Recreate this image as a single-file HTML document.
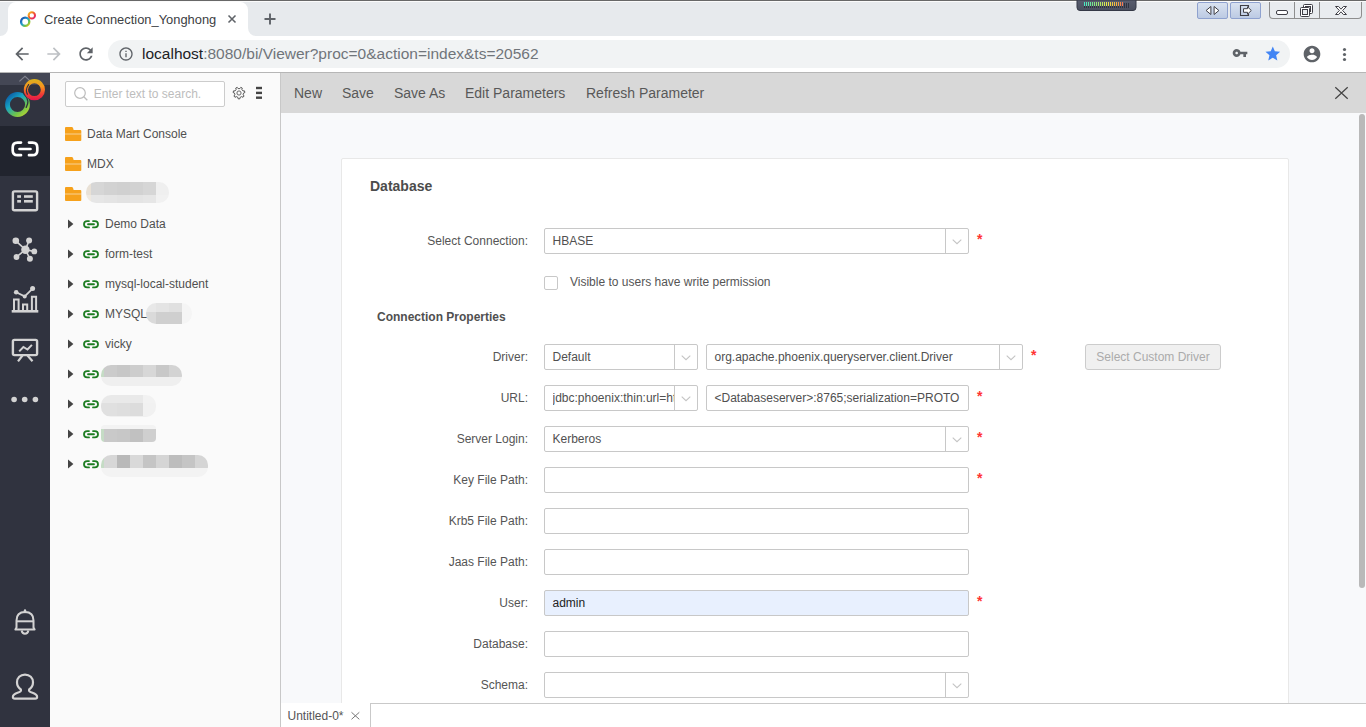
<!DOCTYPE html>
<html>
<head>
<meta charset="utf-8">
<title>Create Connection_Yonghong</title>
<style>
*{box-sizing:border-box;margin:0;padding:0}
html,body{width:1366px;height:727px;overflow:hidden;background:#fff;font-family:"Liberation Sans",sans-serif;}
body{position:relative;font-size:12px;color:#444}
.abs{position:absolute}
svg{display:block;position:absolute;overflow:visible}
/* ---------- browser chrome ---------- */
#tabstrip{left:0;top:0;width:1366px;height:36px;background:#e7eaed}
#topline{left:0;top:0;width:1366px;height:2px;background:linear-gradient(#686868 0,#686868 50%,#fbfbfb 50%,#fbfbfb 100%)}
#tab{left:8px;top:3px;width:240px;height:33px;background:#fff;border-radius:8px 8px 0 0}
#tabtitle{left:44px;top:12px;font-size:12.9px;color:#3c4043;white-space:nowrap;line-height:16px}
#navbar{left:0;top:36px;width:1366px;height:36px;background:#fff}
#navline{left:0;top:72px;width:1366px;height:1px;background:#b6b6b6}
#pill{left:108px;top:40px;width:1182px;height:28px;border-radius:14px;background:#f1f3f4}
#url{left:142px;top:44px;font-size:15.5px;line-height:20px;color:#70757a;white-space:nowrap}
#url b{font-weight:normal;color:#202124}
/* ---------- app ---------- */
#leftnav{left:0;top:73px;width:50px;height:654px;background:#30333f}
#navsel{left:0;top:126px;width:50px;height:50px;background:#21242e}
#navtop{left:0;top:73px;width:50px;height:12px;background:#444755}
#tree{left:50px;top:73px;width:230px;height:654px;background:#fafafa}
#treeborder{left:280px;top:73px;width:1px;height:654px;background:#c8c8c8}
#search{left:65px;top:81px;width:160px;height:26px;border:1px solid #ccc;border-radius:2px;background:#fff}
#search span{position:absolute;left:27.800px;top:5px;font-size:12px;line-height:14px;color:#bdbdbd;white-space:nowrap}
.trow{position:absolute;left:50px;width:230px;height:30px;line-height:32px;font-size:12px;color:#505050;white-space:nowrap}
.trow span{position:absolute;top:0}
/* main */
#mtool{left:281px;top:73px;width:1085px;height:40px;background:#d8d8d8}
#mtool span{position:absolute;top:0;line-height:40px;font-size:14px;color:#585858;white-space:nowrap}
#mainbg{left:281px;top:113px;width:1085px;height:590px;background:#f8f9fb}
#card{left:341px;top:158px;width:948px;height:560px;background:#fff;border:1px solid #e8e8e8;border-radius:2px}
.lbl{position:absolute;left:341px;width:187px;text-align:right;font-size:12px;line-height:26px;color:#555;white-space:nowrap}
.inp{position:absolute;height:26px;border:1px solid #c8c8c8;border-radius:2px;background:#fff;font-size:12px;line-height:24px;color:#505050;white-space:nowrap;overflow:hidden}
.inp span{position:absolute;left:7.500px;top:0}
.inp u{display:block;text-decoration:none;width:122px;overflow:hidden}
.inp i{position:absolute;right:22px;top:0;width:1px;height:24px;background:#c8c8c8}
.star{position:absolute;font-size:14px;line-height:14px;color:#f33;font-weight:bold}
#bottombar{left:281px;top:703px;width:1085px;height:24px;background:#fff}
</style>
</head>
<body>
<!-- ================= BROWSER CHROME ================= -->
<div id="tabstrip" class="abs"></div>
<svg style="left:0;top:0" width="260" height="36" viewBox="0 0 260 36"><path d="M0 36A8 8 0 0 0 8 28V10A8 8 0 0 1 16 2H240A8 8 0 0 1 248 10V28A8 8 0 0 0 256 36Z" fill="#fff"/></svg>
<div id="topline" class="abs"></div>
<div id="tabtitle" class="abs">Create Connection_Yonghong</div>
<div id="navbar" class="abs"></div>
<div id="pill" class="abs"></div>
<div id="url" class="abs"><b>localhost</b>:8080/bi/Viewer?proc=0&amp;action=index&amp;ts=20562</div>
<div id="navline" class="abs"></div>
<!--CHROME-ICONS-START-->
<svg style="left:20px;top:11px" width="16" height="16" viewBox="0 0 16 16" ><defs>
<linearGradient id="fg1" x1="0" y1="0" x2="1" y2="1"><stop offset="0" stop-color="#1b3fa6"/><stop offset=".45" stop-color="#1f9fd0"/><stop offset=".75" stop-color="#6cc24a"/><stop offset="1" stop-color="#f2c61f"/></linearGradient>
<linearGradient id="fg2" x1="0" y1="0" x2="1" y2="1"><stop offset="0" stop-color="#f7c51e"/><stop offset=".5" stop-color="#f0562b"/><stop offset="1" stop-color="#e5177b"/></linearGradient>
</defs>
<circle cx="5.200" cy="10.700" r="4.100" fill="none" stroke="url(#fg1)" stroke-width="2.300"/>
<circle cx="11.800" cy="4.400" r="3.200" fill="none" stroke="url(#fg2)" stroke-width="2"/></svg>
<svg style="left:228px;top:15px" width="8" height="8" viewBox="0 0 8 8" ><path d="M0.500 0.500L7.500 7.500M7.500 0.500L0.500 7.500" stroke="#5f6368" stroke-width="1.550" fill="none"/></svg>
<svg style="left:264px;top:13px" width="12" height="12" viewBox="0 0 12 12" ><path d="M6 0.500V11.500M0.500 6H11.500" stroke="#5f6368" stroke-width="1.900" fill="none"/></svg>
<svg style="left:12px;top:44px" width="20" height="20" viewBox="0 0 24 24" ><path fill="#5f6368" d="M20 11H7.83l5.59-5.59L12 4l-8 8 8 8 1.41-1.41L7.83 13H20v-2z"/></svg>
<svg style="left:44px;top:44px" width="20" height="20" viewBox="0 0 24 24" ><path fill="#bdc0c4" d="M12 4l-1.41 1.41L16.17 11H4v2h12.17l-5.58 5.59L12 20l8-8z"/></svg>
<svg style="left:76px;top:44px" width="20" height="20" viewBox="0 0 24 24" ><path fill="#5f6368" d="M17.65 6.35C16.2 4.9 14.21 4 12 4c-4.42 0-7.99 3.58-7.99 8s3.57 8 7.99 8c3.73 0 6.84-2.55 7.73-6h-2.08c-.82 2.33-3.04 4-5.65 4-3.31 0-6-2.69-6-6s2.69-6 6-6c1.66 0 3.14.69 4.22 1.78L13 11h7V4l-2.35 2.35z"/></svg>
<svg style="left:117.5px;top:46px" width="16" height="16" viewBox="0 0 24 24" ><path fill="#5f6368" d="M11 17h2v-6h-2v6zm1-15C6.48 2 2 6.48 2 12s4.48 10 10 10 10-4.48 10-10S17.52 2 12 2zm0 18c-4.41 0-8-3.59-8-8s3.59-8 8-8 8 3.59 8 8-3.59 8-8 8zM11 9h2V7h-2v2z"/></svg>
<svg style="left:1232px;top:45.300px" width="16" height="16" viewBox="0 0 24 24" ><path fill="#5f6368" d="M12.65 10C11.83 7.67 9.61 6 7 6c-3.31 0-6 2.69-6 6s2.690 6 6 6c2.61 0 4.83-1.67 5.65-4H17v4h4v-4h2v-4H12.65zM7 14c-1.1 0-2-.9-2-2s.9-2 2-2 2 .9 2 2-.9 2-2 2z"/></svg>
<svg style="left:1263.500px;top:45.300px" width="17.600" height="17.600" viewBox="0 0 24 24" ><path fill="#4285f4" d="M12 17.27L18.18 21l-1.64-7.03L22 9.24l-7.19-.61L12 2 9.19 8.63 2 9.24l5.46 4.73L5.82 21z"/></svg>
<svg style="left:1302px;top:44px" width="20" height="20" viewBox="0 0 24 24" ><path fill="#5f6368" d="M12 2C6.48 2 2 6.48 2 12s4.48 10 10 10 10-4.48 10-10S17.52 2 12 2zm0 3c1.66 0 3 1.34 3 3s-1.34 3-3 3-3-1.34-3-3 1.34-3 3-3zm0 14.2c-2.5 0-4.71-1.28-6-3.220.03-1.99 4-3.08 6-3.08 1.990 0 5.97 1.09 6 3.08-1.29 1.94-3.500 3.22-6 3.22z"/></svg>
<svg style="left:1342px;top:47px" width="5" height="15" viewBox="0 0 5 15" ><circle cx="2.5" cy="2.5" r="1.6" fill="#5f6368"/><circle cx="2.5" cy="7.5" r="1.6" fill="#5f6368"/><circle cx="2.5" cy="12.5" r="1.6" fill="#5f6368"/></svg>
<svg style="left:1077px;top:0px" width="59" height="11" viewBox="0 0 59 11" ><defs><linearGradient id="mg" x1="0" y1="0" x2="0" y2="1"><stop offset="0" stop-color="#585d6e"/><stop offset="1" stop-color="#4a4f5f"/></linearGradient></defs><path d="M0 0H59V7.5Q59 10.5 56 10.5H3Q0 10.500 0 7.5Z" fill="url(#mg)" stroke="#353946" stroke-width="1"/><rect x="7" y="2" width="1" height="4" fill="rgb(70, 232, 196)"/><rect x="7" y="6" width="1" height="2" fill="#2f3340"/><rect x="9" y="2" width="1" height="4" fill="rgb(82, 232, 183)"/><rect x="9" y="6" width="1" height="2" fill="#2f3340"/><rect x="11" y="2" width="1" height="4" fill="rgb(95, 232, 169)"/><rect x="11" y="6" width="1" height="2" fill="#2f3340"/><rect x="13" y="2" width="1" height="4" fill="rgb(107, 232, 156)"/><rect x="13" y="6" width="1" height="2" fill="#2f3340"/><rect x="15" y="2" width="1" height="4" fill="rgb(119, 232, 143)"/><rect x="15" y="6" width="1" height="2" fill="#2f3340"/><rect x="17" y="2" width="1" height="4" fill="rgb(131, 232, 129)"/><rect x="17" y="6" width="1" height="2" fill="#2f3340"/><rect x="19" y="2" width="1" height="4" fill="rgb(145, 232, 117)"/><rect x="19" y="6" width="1" height="2" fill="#2f3340"/><rect x="21" y="2" width="1" height="4" fill="rgb(162, 232, 109)"/><rect x="21" y="6" width="1" height="2" fill="#2f3340"/><rect x="23" y="2" width="1" height="4" fill="rgb(179, 232, 100)"/><rect x="23" y="6" width="1" height="2" fill="#2f3340"/><rect x="25" y="2" width="1" height="4" fill="rgb(196, 232, 91)"/><rect x="25" y="6" width="1" height="2" fill="#2f3340"/><rect x="27" y="2" width="1" height="4" fill="rgb(212, 232, 82)"/><rect x="27" y="6" width="1" height="2" fill="#2f3340"/><rect x="29" y="2" width="1" height="4" fill="rgb(229, 232, 74)"/><rect x="29" y="6" width="1" height="2" fill="#2f3340"/><rect x="31" y="2" width="1" height="4" fill="rgb(237, 225, 69)"/><rect x="31" y="6" width="1" height="2" fill="#2f3340"/><rect x="33" y="2" width="1" height="4" fill="rgb(239, 213, 67)"/><rect x="33" y="6" width="1" height="2" fill="#2f3340"/><rect x="35" y="2" width="1" height="4" fill="rgb(240, 201, 65)"/><rect x="35" y="6" width="1" height="2" fill="#2f3340"/><rect x="37" y="2" width="1" height="4" fill="rgb(242, 190, 62)"/><rect x="37" y="6" width="1" height="2" fill="#2f3340"/><rect x="39" y="2" width="1" height="4" fill="rgb(244, 178, 60)"/><rect x="39" y="6" width="1" height="2" fill="#2f3340"/><rect x="41" y="2" width="1" height="4" fill="rgb(244, 159, 67)"/><rect x="41" y="6" width="1" height="2" fill="#2f3340"/><rect x="43" y="2" width="1" height="4" fill="rgb(244, 140, 76)"/><rect x="43" y="6" width="1" height="2" fill="#2f3340"/><rect x="45" y="2" width="1" height="4" fill="rgb(244, 120, 84)"/><rect x="45" y="6" width="1" height="2" fill="#2f3340"/><rect x="47" y="3" width="1" height="5" fill="#2f3340"/><rect x="49" y="3" width="1" height="5" fill="#2f3340"/><rect x="51" y="3" width="1" height="5" fill="#2f3340"/></svg>
<div class="abs" style="left:1197px;top:2px;width:31px;height:17px;border:1px solid #8fa2cf;border-radius:2px;background:linear-gradient(#d9e2f0,#bccae3)"></div>
<div class="abs" style="left:1230px;top:2px;width:31px;height:17px;border:1px solid #8fa2cf;border-radius:2px;background:linear-gradient(#d9e2f0,#bccae3)"></div>
<svg style="left:1205px;top:6px" width="16" height="9" viewBox="0 0 16 9" ><path d="M5.900 0.500V8.500L1.100 4.500Z M9.100 0.500V8.500L13.900 4.500Z" fill="#fff" stroke="#3f3f46" stroke-width="1" stroke-linejoin="round"/></svg>
<svg style="left:1240px;top:5px" width="12" height="11" viewBox="0 0 12 11" ><path d="M8.500 2.500V0.5H0.5V10.5H8.5V8.500" fill="none" stroke="#3f3f46" stroke-width="1.1"/><path d="M3.5 3.700H7.500V1.800L11.300 5.500L7.500 9.200V7.300H3.500Z" fill="#fff" stroke="#3f3f46" stroke-width="1" stroke-linejoin="round"/></svg>
<div class="abs" style="left:1269px;top:2px;width:93px;height:17px;border:1px solid #8e8e8e;border-top:none;border-radius:0 0 4px 4px;background:#e9ecef"></div>
<div class="abs" style="left:1294px;top:2px;width:1px;height:16px;background:#8e8e8e"></div>
<div class="abs" style="left:1319px;top:2px;width:1px;height:16px;background:#8e8e8e"></div>
<svg style="left:1276px;top:10px" width="12" height="5" viewBox="0 0 12 5" ><rect x="0.5" y="0.5" width="11" height="4" rx="1.5" fill="#fff" stroke="#3f3f46" stroke-width="1"/></svg>
<svg style="left:1300px;top:4px" width="13" height="13" viewBox="0 0 13 13" ><rect x="3.5" y="0.5" width="9" height="9" rx="1" fill="#fff" stroke="#3f3f46"/><rect x="5.5" y="2.5" width="5" height="5" fill="#e9ecef" stroke="#3f3f46"/><rect x="0.500" y="3.5" width="9" height="9" rx="1" fill="#fff" stroke="#3f3f46"/><rect x="2.500" y="5.500" width="5" height="5" fill="#e9ecef" stroke="#3f3f46"/></svg>
<svg style="left:1335px;top:5.5px" width="12" height="9" viewBox="0 0 12 9" ><path d="M0.5 0.5H3.600L6 3.200L8.400 0.5H11.500L7.600 4.5L11.500 8.500H8.400L6 5.800L3.600 8.5H0.500L4.400 4.500Z" fill="#fff" stroke="#3f3f46" stroke-width="1" stroke-linejoin="round"/></svg>
<!--CHROME-ICONS-END-->

<!-- ================= APP ================= -->
<div id="leftnav" class="abs"></div>
<div id="navtop" class="abs"></div>
<div id="navsel" class="abs"></div>
<!--NAV-ICONS-START-->
<svg style="left:0;top:73px" width="50" height="654" viewBox="0 73 50 654">
<defs>
<linearGradient id="lg1" gradientUnits="userSpaceOnUse" x1="8" y1="94" x2="27" y2="116"><stop offset="0" stop-color="#0b56a4"/><stop offset=".35" stop-color="#16a3c4"/><stop offset=".7" stop-color="#6fc34c"/><stop offset="1" stop-color="#c2d82e"/></linearGradient>
<linearGradient id="lg2" gradientUnits="userSpaceOnUse" x1="34" y1="79" x2="34" y2="101"><stop offset="0" stop-color="#d8b41f"/><stop offset=".35" stop-color="#f7941d"/><stop offset=".7" stop-color="#ef3b36"/><stop offset="1" stop-color="#e5104f"/></linearGradient>
</defs>
<path d="M19.4 81.400L25 76.400L30.600 81.400" fill="none" stroke="#80838f" stroke-width="1.2"/>
<circle cx="17.500" cy="104.500" r="10" fill="none" stroke="url(#lg1)" stroke-width="4.800"/><path d="M23.600 93.600Q27.600 97.500 27.900 101.500Q28 104 26.200 107.400" fill="none" stroke="#30333f" stroke-width="1.300" stroke-linecap="round"/>
<circle cx="34.400" cy="89.700" r="8.500" fill="none" stroke="url(#lg2)" stroke-width="4.200"/><path d="M28.600 84.600Q26.300 87.600 26.400 90.500Q26.500 92.500 27.400 94.200" fill="none" stroke="#30333f" stroke-width="1.200" stroke-linecap="round"/>
<!-- link (selected, white) -->
<g fill="none" stroke="#fff" stroke-width="2.7" stroke-linecap="round">
<path d="M21 142.600H17.500Q12.700 142.600 12.700 147.400V150.400Q12.700 155.200 17.500 155.200H21"/>
<path d="M29 142.600H32.500Q37.300 142.600 37.300 147.400V150.400Q37.300 155.200 32.500 155.200H29"/>
<path d="M19.500 149H30.500"/>
</g>
<!-- list -->
<rect x="12.900" y="191.400" width="24.200" height="18.800" rx="1.500" fill="none" stroke="#d3d3d3" stroke-width="2.400"/>
<g fill="#d3d3d3"><rect x="17.200" y="195.200" width="3.800" height="2.600"/><rect x="24" y="195.200" width="8.800" height="2.600"/><rect x="17.200" y="200" width="3.800" height="2.600"/><rect x="24" y="200" width="8.800" height="2.600"/></g>
<!-- network -->
<g stroke="#d3d3d3" stroke-width="1.600" fill="#d3d3d3">
<path d="M25.400 249.700L15.800 240.800M25.400 249.700L29.100 240.500M25.400 249.700L34.300 251.400M25.400 249.700L16.500 257M25.400 249.700L29.900 258.700" fill="none"/>
</g>
<g fill="#d3d3d3"><circle cx="25.400" cy="249.700" r="4.200"/><circle cx="15.800" cy="240.800" r="3.300"/><circle cx="29.100" cy="240.500" r="3"/><circle cx="34.300" cy="251.400" r="2.900"/><circle cx="16.500" cy="257" r="2.900"/><circle cx="29.900" cy="258.700" r="3"/></g>
<!-- chart -->
<g fill="none" stroke="#d3d3d3" stroke-width="2">
<path d="M11.700 311.300H38.300" stroke-width="2.600"/>
<path d="M14 311V299.500H18.600V311M23 311V304.600H27.200V311M31.900 311V296.700H36.100V311"/>
<path d="M16.200 292.300L24.700 296.400L32.600 288.600" stroke-width="1.800"/>
</g>
<g fill="#d3d3d3"><circle cx="16.200" cy="292.300" r="2.300"/><circle cx="24.700" cy="296.400" r="2"/><circle cx="32.600" cy="288.600" r="2.500"/></g>
<!-- presentation -->
<g fill="none" stroke="#d3d3d3" stroke-width="2.400">
<rect x="12.900" y="339.900" width="24.200" height="15.200" rx="1.500"/>
<path d="M22.500 355.500L18 361.300M27.500 355.500L32.500 361.300" stroke-width="2.200"/>
<path d="M19.200 351.400L23.400 347L27.500 349.500L31.900 344.900" stroke-width="2"/>
</g>
<!-- dots -->
<g fill="#d3d3d3"><circle cx="14.100" cy="399.500" r="2.800"/><circle cx="24.700" cy="399.500" r="2.800"/><circle cx="35.400" cy="399.500" r="2.800"/></g>
<!-- bell -->
<g fill="none" stroke="#d3d3d3" stroke-width="2" stroke-linejoin="round">
<path d="M15.400 629.500H34.600L33.500 627.500V620.500Q33.500 612 25 612Q16.500 612 16.500 620.500V627.500Z"/>
<path d="M16.500 621.300H33.500"/>
<path d="M21.600 630.500Q22.200 633.800 25 633.800Q27.800 633.800 28.400 630.500"/>
<path d="M25 612V610.400" stroke-linecap="round" stroke-width="2.400"/>
</g>
<!-- user -->
<path d="M25 674.600C20.200 674.600 17 678 17 682.300C17 685.600 18.600 688 20.900 689.500C21.500 691.200 20 692 17.500 692.800C14.500 693.800 12.900 694.900 12.900 697C12.900 698.200 13.600 698.700 14.800 698.700H35.200C36.400 698.700 37.100 698.200 37.100 697C37.100 694.900 35.500 693.800 32.500 692.800C30 692 28.500 691.200 29.100 689.500C31.400 688 33 685.600 33 682.300C33 678 29.800 674.600 25 674.600Z" fill="none" stroke="#d3d3d3" stroke-width="2.200" stroke-linejoin="round"/>
</svg>
<!--NAV-ICONS-END-->
<div id="tree" class="abs"></div>
<div id="treeborder" class="abs"></div>
<div id="search" class="abs"><span>Enter text to search.</span></div>
<!--TREE-START-->
<svg style="left:74px;top:87px" width="14" height="14" viewBox="0 0 14 14"><circle cx="6" cy="6" r="5.3" fill="none" stroke="#bdbdbd" stroke-width="1.2"/><path d="M9.800 9.800L13.300 13.300" stroke="#bdbdbd" stroke-width="1.3" fill="none"/></svg>
<svg style="left:231.900px;top:85.700px" width="14" height="14" viewBox="0 0 14 14"><path d="M8.12 11.36L7.84 12.84L6.16 12.84L5.88 11.36L4.29 10.59L2.96 11.30L1.91 9.98L2.89 8.84L2.50 7.12L1.12 6.52L1.50 4.88L3.00 4.94L4.10 3.56L3.71 2.11L5.23 1.37L6.12 2.59L7.88 2.59L8.77 1.37L10.29 2.11L9.90 3.56L11.00 4.94L12.50 4.88L12.88 6.52L11.50 7.12L11.11 8.84L12.09 9.98L11.04 11.30L9.71 10.59Z" fill="none" stroke="#555" stroke-width="1" stroke-linejoin="round"/><circle cx="7" cy="7" r="2.100" fill="none" stroke="#666" stroke-width="1"/></svg>
<svg style="left:256px;top:86px" width="6" height="14" viewBox="0 0 6 14"><rect x="0" y="0.800" width="6" height="2.400" fill="#444"/><rect x="0" y="5.700" width="6" height="2.400" fill="#444"/><rect x="0" y="10.500" width="6" height="2.400" fill="#444"/></svg>
<svg style="left:50px;top:73px" width="230" height="654" viewBox="50 73 230 654"><defs><clipPath id="b1"><rect x="86" y="182" width="83" height="21" rx="10"/></clipPath><clipPath id="b2"><rect x="146" y="303" width="46" height="21" rx="10"/></clipPath><clipPath id="b3"><rect x="101" y="365" width="81" height="21" rx="10"/></clipPath><clipPath id="b4"><rect x="101" y="395" width="55" height="22" rx="10"/></clipPath><clipPath id="b5"><rect x="101" y="425" width="55" height="17" rx="4"/></clipPath><clipPath id="b6"><rect x="101" y="455" width="107" height="22" rx="10"/></clipPath></defs><g clip-path="url(#b1)"><rect x="86" y="182" width="5" height="13" fill="#e9e1d6"/><rect x="86" y="195" width="5" height="8" fill="#efe9e0"/><rect x="91" y="182" width="13" height="13" fill="#d6d6d6"/><rect x="104" y="182" width="13" height="13" fill="#d2d2d2"/><rect x="117" y="182" width="13" height="13" fill="#d0d0d0"/><rect x="130" y="182" width="13" height="13" fill="#d2d2d2"/><rect x="143" y="182" width="13" height="13" fill="#d6d6d6"/><rect x="156" y="182" width="13" height="13" fill="#efefef"/><rect x="91" y="195" width="13" height="8" fill="#e6e6e6"/><rect x="104" y="195" width="13" height="8" fill="#e4e4e4"/><rect x="117" y="195" width="13" height="8" fill="#e2e2e2"/><rect x="130" y="195" width="13" height="8" fill="#e4e4e4"/><rect x="143" y="195" width="13" height="8" fill="#e6e6e6"/><rect x="156" y="195" width="13" height="8" fill="#f1f1f1"/></g><g clip-path="url(#b2)"><rect x="146" y="303" width="10" height="9" fill="#e8e8e8"/><rect x="156" y="303" width="13" height="9" fill="#e4e4e4"/><rect x="169" y="303" width="13" height="9" fill="#e0e0e0"/><rect x="182" y="303" width="10" height="9" fill="#f5f5f5"/><rect x="146" y="312" width="10" height="12" fill="#dadada"/><rect x="156" y="312" width="13" height="12" fill="#cfcfcf"/><rect x="169" y="312" width="13" height="12" fill="#cfcfcf"/><rect x="182" y="312" width="10" height="12" fill="#f5f5f5"/></g><g clip-path="url(#b3)"><rect x="101" y="365" width="3" height="12" fill="#c5dcc5"/><rect x="104" y="365" width="13" height="12" fill="#cbcbcb"/><rect x="117" y="365" width="13" height="12" fill="#c7c7c7"/><rect x="130" y="365" width="13" height="12" fill="#cdcdcd"/><rect x="143" y="365" width="13" height="12" fill="#d7d7d7"/><rect x="156" y="365" width="13" height="12" fill="#c8c8c8"/><rect x="169" y="365" width="13" height="12" fill="#d3d3d3"/><rect x="101" y="377" width="81" height="9" fill="#efefef"/></g><g clip-path="url(#b4)"><rect x="101" y="395" width="42" height="8" fill="#e9e9e9"/><rect x="143" y="395" width="13" height="8" fill="#f2f2f2"/><rect x="101" y="403" width="16" height="13" fill="#e0e0e0"/><rect x="117" y="403" width="13" height="13" fill="#dedede"/><rect x="130" y="403" width="13" height="13" fill="#dcdcdc"/><rect x="143" y="403" width="13" height="13" fill="#f1f1f1"/><rect x="101" y="416" width="55" height="1" fill="#f0f0f0"/></g><g clip-path="url(#b5)"><rect x="101" y="425" width="55" height="4" fill="#f3f3f3"/><rect x="101" y="429" width="3" height="13" fill="#c5dcc5"/><rect x="104" y="429" width="13" height="13" fill="#c9c9c9"/><rect x="117" y="429" width="13" height="13" fill="#c7c7c7"/><rect x="130" y="429" width="13" height="13" fill="#c1c1c1"/><rect x="143" y="429" width="13" height="13" fill="#cfcfcf"/></g><g clip-path="url(#b6)"><rect x="101" y="455" width="3" height="13" fill="#c5dcc5"/><rect x="104" y="455" width="13" height="13" fill="#d7d7d7"/><rect x="117" y="455" width="13" height="13" fill="#b9b9b9"/><rect x="130" y="455" width="13" height="13" fill="#d9d9d9"/><rect x="143" y="455" width="13" height="13" fill="#c5c5c5"/><rect x="156" y="455" width="13" height="13" fill="#d5d5d5"/><rect x="169" y="455" width="13" height="13" fill="#bdbdbd"/><rect x="182" y="455" width="13" height="13" fill="#c5c5c5"/><rect x="195" y="455" width="13" height="13" fill="#d5d5d5"/><rect x="101" y="468" width="107" height="9" fill="#f3f3f3"/></g></svg>
<svg style="left:64.5px;top:127px" width="16.300" height="14" viewBox="0 0 17 14" preserveAspectRatio="none"><path d="M0 1Q0 0 1 0H7Q8 0 8.400 1L9 3H16Q17 3 17 4V6.800H0Z" fill="#f6a11b"/><path d="M0 7.300H17V13Q17 14 16 14H1Q0 14 0 13Z" fill="#f6a11b"/><rect x="0" y="6.800" width="17" height="0.500" fill="#f9c067"/></svg><div class="trow" style="top:118px"><span style="left:37px">Data Mart Console</span></div>
<svg style="left:64.5px;top:157px" width="16.300" height="14" viewBox="0 0 17 14" preserveAspectRatio="none"><path d="M0 1Q0 0 1 0H7Q8 0 8.400 1L9 3H16Q17 3 17 4V6.800H0Z" fill="#f6a11b"/><path d="M0 7.300H17V13Q17 14 16 14H1Q0 14 0 13Z" fill="#f6a11b"/><rect x="0" y="6.800" width="17" height="0.500" fill="#f9c067"/></svg><div class="trow" style="top:148px"><span style="left:37px">MDX</span></div>
<svg style="left:64.5px;top:187px" width="16.300" height="14" viewBox="0 0 17 14" preserveAspectRatio="none"><path d="M0 1Q0 0 1 0H7Q8 0 8.400 1L9 3H16Q17 3 17 4V6.800H0Z" fill="#f6a11b"/><path d="M0 7.300H17V13Q17 14 16 14H1Q0 14 0 13Z" fill="#f6a11b"/><rect x="0" y="6.800" width="17" height="0.500" fill="#f9c067"/></svg>
<svg style="left:68px;top:219px" width="6" height="10" viewBox="0 0 6 10"><path d="M0 0.400L5.400 5L0 9.600Z" fill="#444"/></svg><svg style="left:83px;top:219.5px" width="16" height="9" viewBox="0 0 16 9"><g fill="none" stroke="#1d7d22" stroke-width="1.800" stroke-linecap="round"><path d="M6 1.100H4.200Q1 1.100 1 4.250Q1 7.400 4.200 7.400H6"/><path d="M10 1.100H11.800Q15 1.100 15 4.250Q15 7.400 11.800 7.400H10"/><path d="M5 4.250H11"/></g></svg><div class="trow" style="top:208px"><span style="left:55px">Demo Data</span></div>
<svg style="left:68px;top:249px" width="6" height="10" viewBox="0 0 6 10"><path d="M0 0.400L5.400 5L0 9.600Z" fill="#444"/></svg><svg style="left:83px;top:249.5px" width="16" height="9" viewBox="0 0 16 9"><g fill="none" stroke="#1d7d22" stroke-width="1.800" stroke-linecap="round"><path d="M6 1.100H4.200Q1 1.100 1 4.250Q1 7.400 4.200 7.400H6"/><path d="M10 1.100H11.800Q15 1.100 15 4.250Q15 7.400 11.800 7.400H10"/><path d="M5 4.250H11"/></g></svg><div class="trow" style="top:238px"><span style="left:55px">form-test</span></div>
<svg style="left:68px;top:279px" width="6" height="10" viewBox="0 0 6 10"><path d="M0 0.400L5.400 5L0 9.600Z" fill="#444"/></svg><svg style="left:83px;top:279.5px" width="16" height="9" viewBox="0 0 16 9"><g fill="none" stroke="#1d7d22" stroke-width="1.800" stroke-linecap="round"><path d="M6 1.100H4.200Q1 1.100 1 4.250Q1 7.400 4.200 7.400H6"/><path d="M10 1.100H11.800Q15 1.100 15 4.250Q15 7.400 11.800 7.400H10"/><path d="M5 4.250H11"/></g></svg><div class="trow" style="top:268px"><span style="left:55px">mysql-local-student</span></div>
<svg style="left:68px;top:309px" width="6" height="10" viewBox="0 0 6 10"><path d="M0 0.400L5.400 5L0 9.600Z" fill="#444"/></svg><svg style="left:83px;top:309.5px" width="16" height="9" viewBox="0 0 16 9"><g fill="none" stroke="#1d7d22" stroke-width="1.800" stroke-linecap="round"><path d="M6 1.100H4.200Q1 1.100 1 4.250Q1 7.400 4.200 7.400H6"/><path d="M10 1.100H11.800Q15 1.100 15 4.250Q15 7.400 11.800 7.400H10"/><path d="M5 4.250H11"/></g></svg><div class="trow" style="top:298px"><span style="left:55px">MYSQL</span></div>
<svg style="left:68px;top:339px" width="6" height="10" viewBox="0 0 6 10"><path d="M0 0.400L5.400 5L0 9.600Z" fill="#444"/></svg><svg style="left:83px;top:339.5px" width="16" height="9" viewBox="0 0 16 9"><g fill="none" stroke="#1d7d22" stroke-width="1.800" stroke-linecap="round"><path d="M6 1.100H4.200Q1 1.100 1 4.250Q1 7.400 4.200 7.400H6"/><path d="M10 1.100H11.800Q15 1.100 15 4.250Q15 7.400 11.800 7.400H10"/><path d="M5 4.250H11"/></g></svg><div class="trow" style="top:328px"><span style="left:55px">vicky</span></div>
<svg style="left:68px;top:369px" width="6" height="10" viewBox="0 0 6 10"><path d="M0 0.400L5.400 5L0 9.600Z" fill="#444"/></svg><svg style="left:83px;top:369.5px" width="16" height="9" viewBox="0 0 16 9"><g fill="none" stroke="#1d7d22" stroke-width="1.800" stroke-linecap="round"><path d="M6 1.100H4.200Q1 1.100 1 4.250Q1 7.400 4.200 7.400H6"/><path d="M10 1.100H11.800Q15 1.100 15 4.250Q15 7.400 11.800 7.400H10"/><path d="M5 4.250H11"/></g></svg>
<svg style="left:68px;top:399px" width="6" height="10" viewBox="0 0 6 10"><path d="M0 0.400L5.400 5L0 9.600Z" fill="#444"/></svg><svg style="left:83px;top:399.5px" width="16" height="9" viewBox="0 0 16 9"><g fill="none" stroke="#1d7d22" stroke-width="1.800" stroke-linecap="round"><path d="M6 1.100H4.200Q1 1.100 1 4.250Q1 7.400 4.200 7.400H6"/><path d="M10 1.100H11.800Q15 1.100 15 4.250Q15 7.400 11.800 7.400H10"/><path d="M5 4.250H11"/></g></svg>
<svg style="left:68px;top:429px" width="6" height="10" viewBox="0 0 6 10"><path d="M0 0.400L5.400 5L0 9.600Z" fill="#444"/></svg><svg style="left:83px;top:429.5px" width="16" height="9" viewBox="0 0 16 9"><g fill="none" stroke="#1d7d22" stroke-width="1.800" stroke-linecap="round"><path d="M6 1.100H4.200Q1 1.100 1 4.250Q1 7.400 4.200 7.400H6"/><path d="M10 1.100H11.800Q15 1.100 15 4.250Q15 7.400 11.800 7.400H10"/><path d="M5 4.250H11"/></g></svg>
<svg style="left:68px;top:459px" width="6" height="10" viewBox="0 0 6 10"><path d="M0 0.400L5.400 5L0 9.600Z" fill="#444"/></svg><svg style="left:83px;top:459.5px" width="16" height="9" viewBox="0 0 16 9"><g fill="none" stroke="#1d7d22" stroke-width="1.800" stroke-linecap="round"><path d="M6 1.100H4.200Q1 1.100 1 4.250Q1 7.400 4.200 7.400H6"/><path d="M10 1.100H11.800Q15 1.100 15 4.250Q15 7.400 11.800 7.400H10"/><path d="M5 4.250H11"/></g></svg>
<!--TREE-END-->

<div id="mtool" class="abs">
<span style="left:13px">New</span><span style="left:61px">Save</span><span style="left:113px">Save As</span><span style="left:184px">Edit Parameters</span><span style="left:305px">Refresh Parameter</span>
</div>
<div id="mainbg" class="abs"></div>
<div id="card" class="abs"></div>
<!--FORM-START-->
<div class="abs" style="left:370px;top:178px;font-size:14px;line-height:16px;font-weight:bold;color:#4c4c4c">Database</div>
<div class="lbl" style="top:228px">Select Connection:</div>
<div class="lbl" style="top:344px">Driver:</div>
<div class="lbl" style="top:385px">URL:</div>
<div class="lbl" style="top:426px">Server Login:</div>
<div class="lbl" style="top:467px">Key File Path:</div>
<div class="lbl" style="top:508px">Krb5 File Path:</div>
<div class="lbl" style="top:549px">Jaas File Path:</div>
<div class="lbl" style="top:590px">User:</div>
<div class="lbl" style="top:631px">Database:</div>
<div class="lbl" style="top:672px">Schema:</div>
<div class="inp" style="left:544px;top:228px;width:425px"><span>HBASE</span><i></i></div><svg style="left:952px;top:239px" width="10" height="6" viewBox="0 0 10 6"><path d="M0.7 0.7 L5 4.7 L9.3 0.7" fill="none" stroke="#c4c4c4" stroke-width="1.1"/></svg>
<div class="star" style="left:977px;top:232px">*</div>
<div class="abs" style="left:544px;top:276px;width:14px;height:14px;border:1px solid #c8c8c8;border-radius:2px;background:#fff"></div>
<div class="abs" style="left:570px;top:275px;font-size:12px;line-height:14px;color:#555;white-space:nowrap">Visible to users have write permission</div>
<div class="abs" style="left:377px;top:310px;font-size:12px;line-height:14px;font-weight:bold;color:#505050;white-space:nowrap">Connection Properties</div>
<div class="inp" style="left:544px;top:344px;width:154px"><span>Default</span><i></i></div><svg style="left:681px;top:355px" width="10" height="6" viewBox="0 0 10 6"><path d="M0.7 0.7 L5 4.7 L9.3 0.7" fill="none" stroke="#c4c4c4" stroke-width="1.1"/></svg>
<div class="inp" style="left:706px;top:344px;width:317px"><span>org.apache.phoenix.queryserver.client.Driver</span><i></i></div><svg style="left:1006px;top:355px" width="10" height="6" viewBox="0 0 10 6"><path d="M0.7 0.7 L5 4.7 L9.3 0.7" fill="none" stroke="#c4c4c4" stroke-width="1.1"/></svg>
<div class="star" style="left:1031px;top:348px">*</div>
<div class="abs" style="left:1085px;top:344px;width:136px;height:26px;border:1px solid #ccc;border-radius:3px;background:#f0f0f0;font-size:12px;line-height:24px;text-align:center;color:#ababab;white-space:nowrap">Select Custom Driver</div>
<div class="inp" style="left:544px;top:385px;width:154px"><span><u>jdbc:phoenix:thin:url=ht</u></span><i></i></div><svg style="left:681px;top:396px" width="10" height="6" viewBox="0 0 10 6"><path d="M0.7 0.7 L5 4.7 L9.3 0.7" fill="none" stroke="#c4c4c4" stroke-width="1.1"/></svg>
<div class="inp" style="left:706px;top:385px;width:263px;"><span>&lt;Databaseserver&gt;:8765;serialization=PROTO</span></div>
<div class="star" style="left:977px;top:389px">*</div>
<div class="inp" style="left:544px;top:426px;width:425px"><span>Kerberos</span><i></i></div><svg style="left:952px;top:437px" width="10" height="6" viewBox="0 0 10 6"><path d="M0.7 0.7 L5 4.7 L9.3 0.7" fill="none" stroke="#c4c4c4" stroke-width="1.1"/></svg>
<div class="star" style="left:977px;top:430px">*</div>
<div class="inp" style="left:544px;top:467px;width:425px;"><span></span></div>
<div class="star" style="left:977px;top:471px">*</div>
<div class="inp" style="left:544px;top:508px;width:425px;"><span></span></div>
<div class="inp" style="left:544px;top:549px;width:425px;"><span></span></div>
<div class="inp" style="left:544px;top:590px;width:425px;background:#e8f0fe;color:#222"><span>admin</span></div>
<div class="star" style="left:977px;top:594px">*</div>
<div class="inp" style="left:544px;top:631px;width:425px;"><span></span></div>
<div class="inp" style="left:544px;top:672px;width:425px"><span></span><i></i></div><svg style="left:952px;top:683px" width="10" height="6" viewBox="0 0 10 6"><path d="M0.7 0.7 L5 4.7 L9.3 0.7" fill="none" stroke="#c4c4c4" stroke-width="1.1"/></svg>
<!--FORM-END-->
<div id="bottombar" class="abs"></div>
<!--BOTTOM-START-->
<div class="abs" style="left:370px;top:703px;width:996px;height:24px;border-top:1px solid #c9c9c9;border-left:1px solid #c9c9c9;background:#fff"></div>
<div class="abs" style="left:287.500px;top:704px;font-size:12px;line-height:25px;color:#555;white-space:nowrap">Untitled-0*</div>
<svg style="left:351px;top:712px" width="9" height="8" viewBox="0 0 9 8"><path d="M0.500 0.300L8.300 7.300M8.300 0.300L0.500 7.300" stroke="#777" stroke-width="1" fill="none"/></svg>
<svg style="left:1334.500px;top:87px" width="13" height="12" viewBox="0 0 13 12"><path d="M0.300 0.200L12.700 11.800M12.700 0.200L0.300 11.800" stroke="#444" stroke-width="1.200" fill="none"/></svg>
<div class="abs" style="left:1359px;top:114px;width:6px;height:474px;border-radius:3px;background:#b9b9b9"></div>
<!--BOTTOM-END-->
</body>
</html>
